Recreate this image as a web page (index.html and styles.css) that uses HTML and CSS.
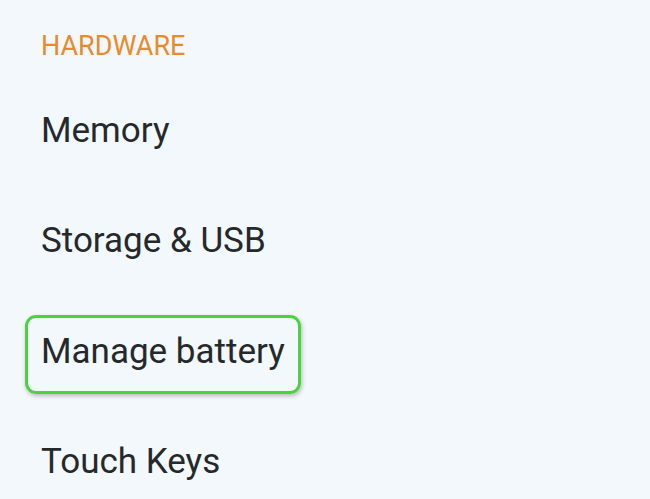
FILE: index.html
```html
<!DOCTYPE html>
<html lang="en">
<head>
  <meta charset="UTF-8" />
  <meta name="viewport" content="width=device-width, initial-scale=1.0"/>
  <title>Hardware settings</title>
  <link rel="stylesheet" href="styles.css">
</head>
<body>
  <div class="settings">
    <h2 class="section-title">HARDWARE</h2>
    <ul class="setting-list">
      <li class="setting-item"><span>Memory</span></li>
      <li class="setting-item"><span>Storage &amp; USB</span></li>
      <li class="setting-item"><span class="highlight">Manage battery</span></li>
      <li class="setting-item"><span>Touch Keys</span></li>
    </ul>
  </div>
</body>
</html>
```

FILE: styles.css
```css
html, body {
  margin: 0;
  padding: 0;
  background-color: #f2f8fb;
}
body {
  font-family: Roboto, "Noto Sans", Arial, sans-serif;
  color: #25292c;
  overflow: hidden;
}
.settings {
  padding: 30px 0 0 41px;
}
.section-title {
  margin: 0 0 13px;
  font-size: 27px;
  font-weight: 400;
  line-height: 32px;
  color: #e98a2c;
}
.setting-list {
  list-style: none;
  margin: 0;
  padding: 0;
}
.setting-item {
  display: flex;
  align-items: center;
  height: 110.5px;
  font-size: 35px;
  line-height: 41px;
}
.highlight {
  margin: 7px 0 0 -16px;
  padding: 13px 13px 19px 13px;
  border: 3px solid #4cd23b;
  border-radius: 11px;
  box-shadow: 1px 2px 4px rgba(0,0,0,0.25);
}
```
